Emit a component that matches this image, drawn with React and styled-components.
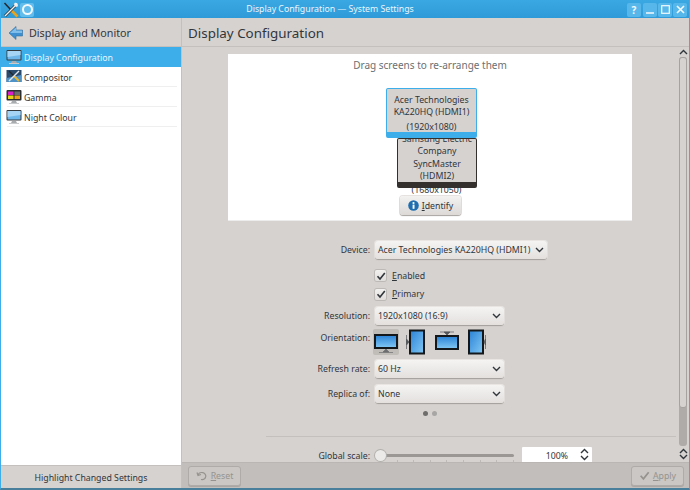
import React from "react";
import styled, { createGlobalStyle } from "styled-components";

const Global = createGlobalStyle`
  html, body { margin: 0; padding: 0; background: #d6d2d0; }
  body { font-family: "Noto Sans", "Open Sans", sans-serif; font-size: 8.75px; color: #31363b; }
  * { box-sizing: border-box; }
`;

const Win = styled.div`
  width: 690px; height: 490px; display: flex; flex-direction: column; overflow: hidden;
  background: #d6d2d0; border: 1px solid #3daee9; border-top: 0; border-bottom: 2px solid #4a7f9c;
`;
const Title = styled.div`
  height: 18px; flex: none; display: flex; align-items: center; padding: 1px 2px 0 2px; position: relative;
  background: linear-gradient(#3aa8e2, #2f9ad8); color: #eaf6fd; font-size: 8.75px;
`;
const TitleText = styled.div`
  position: absolute; left: 0; right: 30px; text-align: center; top: 2px; line-height: 14px;
`;
const TitleIcons = styled.div`display: flex; align-items: center; gap: 1px;`;
const Pin = styled.div`
  width: 14px; height: 14px; border-radius: 2px; background: #62bdec; display: flex; align-items: center; justify-content: center;
  &::after { content: ""; width: 7px; height: 7px; border-radius: 50%; border: 2px solid #f2f9fd; }
`;
const WinBtns = styled.div`margin-left: auto; display: flex; gap: 1px; position: relative;`;
const WinBtn = styled.div`
  width: 14px; height: 14px; border-radius: 2px; background: #58b7ea; display: flex; align-items: center; justify-content: center;
  color: #f4fafe; font-weight: 700; font-size: 10px; line-height: 1; margin-right: ${p => p.$mr ?? 0}px;
`;
const Body = styled.div`flex: 1; display: flex; min-height: 0;`;
const Side = styled.aside`
  width: 181px; flex: none; display: flex; flex-direction: column; border-right: 1px solid #c4c0bd;
`;
const SideHead = styled.div`
  height: 29px; flex: none; display: flex; align-items: center; gap: 5px; padding: 1px 0 0 7px;
  font-size: 10.75px; color: #31363b; border-bottom: 1px solid #c4c0bd;
`;
const List = styled.div`flex: 1; background: #fff; display: flex; flex-direction: column;`;
const Item = styled.div`
  height: 20px; display: flex; align-items: center; gap: 2px; padding-left: 5px; position: relative;
  background: ${p => (p.$sel ? "#3daee9" : "transparent")};
  color: ${p => (p.$sel ? "#e8f5fc" : "#31363b")};
  &::after {
    content: ""; position: absolute; left: 6px; right: 4px; bottom: 0; height: 1px;
    background: ${p => (p.$sel ? "transparent" : "#efefef")};
  }
`;
const ItemText = styled.span`padding-top: 1px;`;
const SideFoot = styled.div`
  height: 23px; flex: none; display: flex; align-items: center; justify-content: center; border-top: 1px solid #c4c0bd; padding-top: 1px;
`;
const Main = styled.main`flex: 1; display: flex; flex-direction: column; min-width: 0;`;
const MainHead = styled.div`
  height: 29px; flex: none; display: flex; align-items: center; padding: 1px 0 0 6px; font-size: 13.4px; color: #31363b;
  border-bottom: 1px solid #c4c0bd;
`;
const ScrollWrap = styled.div`flex: 1; min-height: 0; display: flex; overflow: hidden;`;
const Content = styled.div`
  width: 496px; flex: none; padding: 7px 0 0 46px; display: flex; flex-direction: column; overflow: hidden;
`;
const Canvas = styled.div`
  width: 404px; height: 167px; flex: none; background: #fff; position: relative; overflow: hidden; text-align: center;
  border-bottom: 1px solid #ececec;
`;
const Hint = styled.div`margin-top: 4px; font-size: 10px; line-height: 15px; color: #6c6f72;`;
const Screen = styled.div`
  position: absolute; left: ${p => p.$x}px; top: ${p => p.$y}px; width: ${p => p.$w}px; height: ${p => p.$h}px;
  border-radius: 2px; background: #d6d2d0; overflow: hidden; text-align: center; line-height: 12.3px; color: #31363b; font-size: 8.75px;
  border: 1px solid ${p => p.$c}; border-bottom: 6px solid ${p => p.$c};
  z-index: ${p => p.$z};
`;
const ScreenLabel = styled.div`margin-top: ${p => p.$top}px;`;
const Res = styled.div`margin-top: 2px;`;
const FarRes = styled.div`
  position: absolute; left: 158px; width: 101px; top: 130px; line-height: 12px; font-size: 8.75px; z-index: 0; color: #31363b;
`;
const Identify = styled.div`
  position: absolute; left: 172px; top: 142px; width: 61px; height: 19px; border-radius: 3px; z-index: 3;
  display: flex; align-items: center; justify-content: center; gap: 3px;
  background: linear-gradient(#f3f2f1, #dcd9d7); box-shadow: 0 1px 1px #a9a6a3, 0 0 0 1px #e5e2e0;
`;
const Form = styled.div`
  margin-left: -46px; display: flex; flex-direction: column; padding-top: 20px;
`;
const Row = styled.div`
  display: grid; grid-template-columns: 188px auto; column-gap: 5px; align-items: ${p => p.$top ? "start" : "center"}; justify-content: start;
  margin-bottom: ${p => p.$mb ?? 0}px; height: ${p => p.$h ?? 19}px;
`;
const Label = styled.div`text-align: right; line-height: 14px; padding-top: ${p => p.$pt ?? 0}px;`;
const Select = styled.div`
  width: ${p => p.$w}px; height: 18px; border-radius: 3px; display: flex; align-items: center; justify-content: space-between; white-space: nowrap;
  padding: 0 3px 0 3px; background: linear-gradient(#f5f4f3, #e3e0de); box-shadow: 0 1px 1px #9f9c99, 0 0 0 1px #e8e5e3; line-height: 1;
`;
const Check = styled.div`
  grid-column: 2; display: flex; align-items: center; gap: 6px;
`;
const Box = styled.div`
  width: 11px; height: 11px; border-radius: 2px; background: linear-gradient(#f2f1f0, #e0dddb);
  box-shadow: 0 0 0 1px #bcb9b6; display: flex; align-items: center; justify-content: center;
`;
const Orient = styled.div`display: flex; gap: 4px; align-items: center; margin-left: -2px;`;
const OBtn = styled.div`
  width: ${p => p.$w ?? 26}px; height: 26px; border-radius: 2px; display: flex; align-items: center; justify-content: center; margin-left: ${p => p.$ml ?? 0}px;
  background: ${p => (p.$on ? "#c0bdb9" : "transparent")};
`;
const Dots = styled.div`display: flex; gap: 4px; height: 5px; margin: 8px 0 0 241px;`;
const Dot = styled.div`width: 5px; height: 5px; border-radius: 50%; background: ${p => p.$c};`;
const Sep = styled.div`height: 1px; width: 410px; margin: 20px 0 0 84px; background: #c4c0bd;`;
const ScaleRow = styled.div`display: grid; grid-template-columns: 188px auto auto; column-gap: 5px; margin-top: 10px; align-items: center; justify-content: start; height: 18px;`;
const SliderBox = styled.div`width: 139px; height: 18px; position: relative; margin-right: 3px;`;
const Groove = styled.div`position: absolute; left: 1px; right: 0; top: 7px; height: 3px; border-radius: 2px; background: #9a9794;`;
const Ticks = styled.div`
  position: absolute; left: 5px; right: 0; top: 13px; height: 5px;
  background: repeating-linear-gradient(90deg, #bcb9b6 0 1px, transparent 1px 16.6px);
`;
const Handle = styled.div`
  position: absolute; left: 0; top: 3px; width: 11px; height: 11px; border-radius: 50%;
  background: #eceae8; box-shadow: 0 0 0 1px #b3b0ad;
`;
const Spin = styled.div`
  width: 70px; height: 18px; background: #fff; display: flex; align-items: center; justify-content: center; position: relative; border-radius: 1px;
`;
const SpinArrows = styled.div`position: absolute; right: 3px; top: 1px; display: flex; flex-direction: column; gap: 1px;`;
const Scrollbar = styled.div`
  width: 10px; margin-left: auto; flex: none; display: flex; flex-direction: column; align-items: center; padding: 2px 1px 2px 1px; margin-right: 1px;
`;
const Thumb = styled.div`width: 8px; flex: 1; margin: 2px 0; border-radius: 3px; background: #aeaba8; display: flex; flex-direction: column;`;
const ThumbTop = styled.div`height: 351px; border-radius: 3px; background: #d6d2d0; border: 1px solid #a5a29f;`;
const BottomBar = styled.div`
  height: 26px; flex: none; background: #c1bebb; display: flex; align-items: center; justify-content: space-between; padding: 0 5px 0 6px; border-top: 1px solid #b9b6b3;
`;
const Btn = styled.div`
  width: ${p => p.$w}px; height: 20px; border-radius: 3px; display: flex; align-items: center; justify-content: center; gap: 3px;
  color: #96938f; border: 1px solid #aeaba8; box-shadow: 0 1px 0 #a9a6a3; background: #cac7c4;
`;
const U = styled.span`text-decoration: underline; text-underline-offset: 1px;`;

const Chevron = ({ up }) => (
  <svg width="9" height="6" viewBox="0 0 9 6"><path d={up ? "M1 5 4.5 1.5 8 5" : "M1 1 4.5 4.5 8 1"} fill="none" stroke="#31363b" strokeWidth="1.4" /></svg>
);
const Tools = () => (
  <svg width="16" height="16" viewBox="0 0 16 16">
    <path d="M1.5 1 8 8" stroke="#23282c" strokeWidth="1.5" />
    <path d="M8.5 8.5 14.5 14.5" stroke="#e8a21c" strokeWidth="2.6" />
    <path d="M13 3 2 14" stroke="#23282c" strokeWidth="2.6" />
    <path d="M13 3 2 14" stroke="#eef0f1" strokeWidth="1.4" />
    <path d="M11.5 1c2.5-.8 4 1 3.2 3.4L13 5l-2-2z" fill="#eef0f1" />
  </svg>
);
const Back = () => (
  <svg width="16" height="14" viewBox="0 0 16 14">
    <path d="M8 0.5 1 7l7 6.5V10h6.5V4H8z" fill="#3d8fd0" stroke="#2f6f9f" strokeWidth=".6" />
    <path d="M8 1.5 2 7h12V4.5H8z" fill="#7fbdea" />
  </svg>
);
const Monitor = ({ w = 16 }) => (
  <svg width={w} height={w} viewBox="0 0 16 16">
    <rect x="0.5" y="1" width="15" height="10.5" rx="1" fill="#34393d" />
    <rect x="1.5" y="2" width="13" height="8.5" fill="#6fb6ea" />
    <path d="M1.5 2h13v4L1.5 8z" fill="#a5d4f4" />
    <path d="M6 12h4l1 2H5z" fill="#a9acae" />
    <rect x="3" y="14" width="10" height="1" fill="#c9cbcc" />
  </svg>
);
const Compositor = () => (
  <svg width="16" height="16" viewBox="0 0 16 16">
    <rect x="0.5" y="1" width="15" height="12" fill="#2a4a6c" />
    <path d="M.5 9 15.5 6v7H.5z" fill="#4f92c8" />
    <path d="M3 2 8 7" stroke="#23282c" strokeWidth="1.3" />
    <path d="M8 7 13 12" stroke="#e9b52c" strokeWidth="2" />
    <path d="M13 2 3 12" stroke="#e4e6e7" strokeWidth="1.5" />
  </svg>
);
const Gamma = () => (
  <svg width="16" height="16" viewBox="0 0 16 16">
    <rect x="0.5" y="1" width="15" height="10.5" rx="1" fill="#2b2f32" />
    <rect x="2" y="2.5" width="5.5" height="3.5" fill="#d920c8" />
    <rect x="2" y="6.5" width="5.5" height="3.5" fill="#e7d414" />
    <rect x="8.5" y="2.5" width="5.5" height="3.5" fill="#6c6f72" />
    <rect x="8.5" y="6.5" width="5.5" height="3.5" fill="#e8a21c" />
    <path d="M6 12h4l1 2H5z" fill="#a9acae" />
    <rect x="3" y="14" width="10" height="1" fill="#c9cbcc" />
  </svg>
);
const Info = () => (
  <svg width="11" height="11" viewBox="0 0 11 11">
    <circle cx="5.5" cy="5.5" r="5.3" fill="#1f6fb0" />
    <rect x="4.6" y="4.6" width="1.9" height="4.2" fill="#fff" />
    <circle cx="5.5" cy="3" r="1.1" fill="#fff" />
  </svg>
);
const CheckMark = ({ c = "#31363b", s = 10 }) => (
  <svg width={s} height={s} viewBox="0 0 10 10"><path d="M1.5 5.2 4 8l4.8-6" fill="none" stroke={c} strokeWidth="1.6" /></svg>
);
const Grad = ({ id, x2, y2 }) => (
  <defs><linearGradient id={id} x1="0" y1="0" x2={x2} y2={y2}><stop offset="0" stopColor="#2f86d8" /><stop offset="1" stopColor="#7cc4f2" /></linearGradient></defs>
);
const OLand = ({ flip, id }) => (
  <svg width="26" height="26" viewBox="0 0 26 26">
    <Grad id={id} x2="0" y2="1" />
    <rect x="1" y={flip ? 6 : 5} width="24" height="15" fill="#14181b" />
    <rect x="3" y={flip ? 8 : 7} width="20" height="11" fill={`url(#${id})`} />
    {flip
      ? <path d="M6 3h14M13 6l-3-3h6z" stroke="#55585a" fill="#55585a" strokeWidth=".7" />
      : <path d="M6 23.5h14M13 20l-3 3h6z" stroke="#6d6f70" fill="#6d6f70" strokeWidth=".7" />}
  </svg>
);
const OPort = ({ left, id }) => (
  <svg width="20" height="26" viewBox="0 0 20 26">
    <Grad id={id} x2="1" y2="1" />
    <rect x={left ? 4 : 1} y="0.5" width="16" height="25" fill="#14181b" />
    <rect x={left ? 6 : 3} y="2.5" width="12" height="21" fill={`url(#${id})`} />
    {left
      ? <path d="M1.5 6v14M4 13 1.5 10v6z" stroke="#55585a" fill="#55585a" strokeWidth=".7" />
      : <path d="M18.5 6v14M17 13l1.5-3v6z" stroke="#55585a" fill="#55585a" strokeWidth=".7" />}
  </svg>
);
const Undo = () => (
  <svg width="12" height="10" viewBox="0 0 12 10"><path d="M2 4a4 3.5 0 1 1 3 4.5M1 1.5 2 4.5 5 3.5" fill="none" stroke="#96938f" strokeWidth="1.2" /></svg>
);

export default function App() {
  return (
    <Win>
      <Global />
      <Title>
        <TitleIcons><Tools /><Pin /></TitleIcons>
        <TitleText>Display Configuration — System Settings</TitleText>
        <WinBtns>
          <WinBtn $mr={1}>?</WinBtn>
          <WinBtn><svg width="8" height="8" viewBox="0 0 8 8"><path d="M0 7h8" stroke="#f4fafe" strokeWidth="1.5" /></svg></WinBtn>
          <WinBtn><svg width="9" height="9" viewBox="0 0 9 9"><rect x=".7" y=".7" width="7.6" height="7.6" fill="none" stroke="#f4fafe" strokeWidth="1.2" /></svg></WinBtn>
          <WinBtn><svg width="9" height="9" viewBox="0 0 9 9"><path d="M1 1l7 7M8 1 1 8" stroke="#f4fafe" strokeWidth="1.6" /></svg></WinBtn>
        </WinBtns>
      </Title>
      <Body>
        <Side>
          <SideHead><Back />Display and Monitor</SideHead>
          <List>
            <Item $sel><Monitor /><ItemText>Display Configuration</ItemText></Item>
            <Item><Compositor /><ItemText>Compositor</ItemText></Item>
            <Item><Gamma /><ItemText>Gamma</ItemText></Item>
            <Item><Monitor /><ItemText>Night Colour</ItemText></Item>
          </List>
          <SideFoot>Highlight Changed Settings</SideFoot>
        </Side>
        <Main>
          <MainHead>Display Configuration</MainHead>
          <ScrollWrap>
            <Content>
              <Canvas>
                <Hint>Drag screens to re-arrange them</Hint>
                <Screen $x={158} $y={34} $w={91} $h={50} $c="#3daee9" $z={2}>
                  <ScreenLabel $top={5}>Acer Technologies<br />KA220HQ (HDMI1)</ScreenLabel>
                  <Res>(1920x1080)</Res>
                </Screen>
                <Screen $x={169} $y={84} $w={80} $h={50} $c="#33302e" $z={1}>
                  <ScreenLabel $top={-6}>Samsung Electric<br />Company<br />SyncMaster<br />(HDMI2)</ScreenLabel>
                </Screen>
                <FarRes>(1680x1050)</FarRes>
                <Identify><Info /><span><U>I</U>dentify</span></Identify>
              </Canvas>
              <Form>
                <Row $h={18} $mb={7}>
                  <Label>Device:</Label>
                  <Select $w={172}>Acer Technologies KA220HQ (HDMI1)<Chevron /></Select>
                </Row>
                <Row $h={19}><span /><Check><Box><CheckMark /></Box><span><U>E</U>nabled</span></Check></Row>
                <Row $h={18} $mb={4}><span /><Check><Box><CheckMark /></Box><span><U>P</U>rimary</span></Check></Row>
                <Row $h={18} $mb={4}>
                  <Label>Resolution:</Label>
                  <Select $w={129}>1920x1080 (16:9)<Chevron /></Select>
                </Row>
                <Row $top $h={26} $mb={5}>
                  <Label $pt={2}>Orientation:</Label>
                  <Orient>
                    <OBtn $on><OLand id="g1" /></OBtn>
                    <OBtn $w={20} $ml={2}><OPort left id="g2" /></OBtn>
                    <OBtn $ml={5}><OLand flip id="g3" /></OBtn>
                    <OBtn $w={20} $ml={3}><OPort id="g4" /></OBtn>
                  </Orient>
                </Row>
                <Row $h={18} $mb={7}>
                  <Label>Refresh rate:</Label>
                  <Select $w={129}>60 Hz<Chevron /></Select>
                </Row>
                <Row $h={18}>
                  <Label>Replica of:</Label>
                  <Select $w={129}>None<Chevron /></Select>
                </Row>
                <Dots><Dot $c="#6f6e6d" /><Dot $c="#a8a6a4" /></Dots>
                <Sep />
                <ScaleRow>
                  <Label>Global scale:</Label>
                  <SliderBox><Groove /><Ticks /><Handle /></SliderBox>
                  <Spin>100%<SpinArrows><Chevron up /><Chevron /></SpinArrows></Spin>
                </ScaleRow>
              </Form>
            </Content>
            <Scrollbar>
              <Chevron up />
              <Thumb><ThumbTop /></Thumb>
              <Chevron up />
              <Chevron />
            </Scrollbar>
          </ScrollWrap>
          <BottomBar>
            <Btn $w={53}><Undo /><span><U>R</U>eset</span></Btn>
            <Btn $w={53}><CheckMark c="#96938f" s={11} /><span><U>A</U>pply</span></Btn>
          </BottomBar>
        </Main>
      </Body>
    </Win>
  );
}
